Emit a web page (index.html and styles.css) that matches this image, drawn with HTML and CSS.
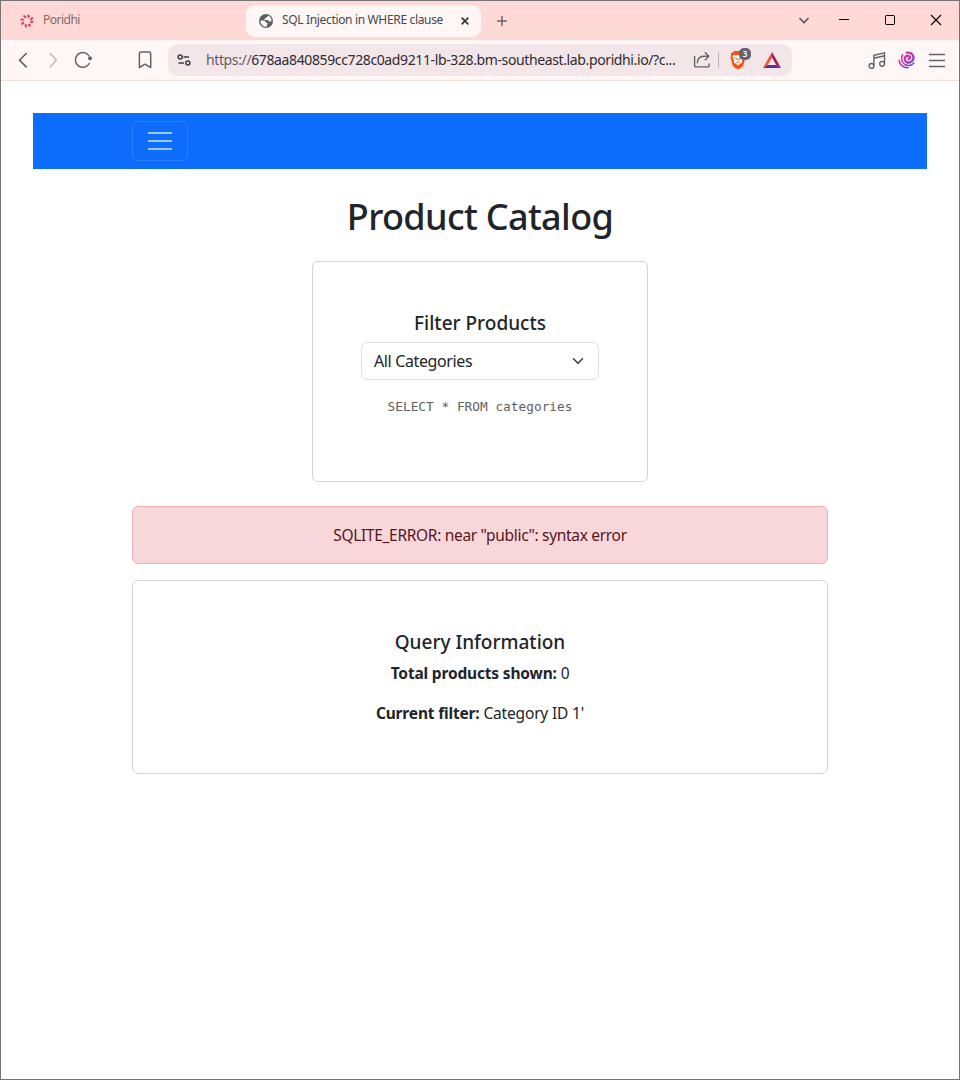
FILE: index.html
```html
<!DOCTYPE html>
<html lang="en">
<head>
<meta charset="utf-8">
<title>SQL Injection in WHERE clause</title>
<link rel="stylesheet" href="styles.css">
</head>
<body>
<div class="window">
  <header class="tabstrip">
    <div class="tab tab-idle">
      <svg class="poridhi-icon" width="14" height="14" viewBox="0 0 14 14" fill="none" stroke-width="2.2">
        <circle cx="7" cy="7" r="4.6" stroke="#e8395f" stroke-dasharray="2.2 1.41"/>
        <circle cx="7" cy="7" r="6" stroke="#b8327c" stroke-width="1.2" stroke-dasharray="1.6 3.11"/>
      </svg>
      <span class="tab-label idle-label">Poridhi</span>
    </div>
    <div class="tab tab-active">
      <svg class="globe" width="14" height="14" viewBox="0 0 14 14">
        <circle cx="7" cy="7" r="7" fill="#5b5e64"/>
        <path d="M8.800 1.500A5.800 5.800 0 0 1 12.700 6.300C12.100 7.100 11.700 7.700 10.900 7.700 9.600 7.700 9.500 6 8.200 6H5.400V4.800L6.800 4.500 7.200 3.200 8.800 2.800Z" fill="#fff7f5"/>
        <path d="M1.400 6.600H4.800C6.300 6.600 6.300 8.700 7.700 8.800 8.900 8.900 8.900 10.200 8 10.700L7.700 12.700A5.700 5.700 0 0 1 1.400 6.600Z" fill="#fff7f5"/>
      </svg>
      <span class="tab-label active-label">SQL Injection in WHERE clause</span>
      <svg class="tab-close" width="8" height="8" viewBox="0 0 8 8"><path d="M.7.7 7.3 7.3M7.3.7.7 7.3" stroke="#36373d" stroke-width="1.7"/></svg>
    </div>
    <svg class="tab-new" width="12" height="12" viewBox="0 0 12 12"><path d="M6 1v10M1 6h10" stroke="#62646b" stroke-width="1.5"/></svg>
    <div class="window-controls">
      <svg width="40" height="39" viewBox="0 0 40 39" fill="none"><path d="m15.500 17 4.500 4.700 4.500-4.700" stroke="#5f626a" stroke-width="1.700"/></svg>
      <svg width="40" height="39" viewBox="0 0 40 39"><path d="M15 18.500h10" stroke="#000"/></svg>
      <svg width="52" height="39" viewBox="0 0 52 39" fill="none"><rect x="21.500" y="14.500" width="9" height="9" rx=".8" stroke="#000"/></svg>
      <svg width="43" height="39" viewBox="0 0 43 39"><path d="m15 14 10 10m0-10L15 24" stroke="#000" stroke-width="1.100"/></svg>
    </div>
  </header>

  <div class="toolbar">
    <svg class="nav-buttons" width="100" height="39" viewBox="0 0 100 39" fill="none" stroke-linecap="round" stroke-linejoin="round">
      <path d="m25.200 12.500-6.700 6.700 6.700 6.700" stroke="#55585e" stroke-width="1.500"/>
      <path d="m49.200 12.500 6.200 6.700-6.200 6.700" stroke="#bdb8ba" stroke-width="1.500"/>
      <path d="M87.800 14.600A7.400 7.400 0 1 0 88.300 22.500" stroke="#62656d" stroke-width="1.500"/>
      <circle cx="89" cy="17.300" r="2" fill="#62656d"/>
    </svg>
    <svg class="bookmark" width="14" height="18" viewBox="0 0 14 18" fill="none" stroke="#62656d" stroke-width="1.500" stroke-linejoin="round"><path d="M3 1h8.200a1.500 1.500 0 0 1 1.500 1.500V16.500L7 13.200 1.400 16.500V2.500A1.500 1.500 0 0 1 3 1Z"/></svg>
    <div class="address">
      <svg class="site-settings" width="14" height="14" viewBox="0 0 14 14" fill="none" stroke="#403d43" stroke-width="1.500"><circle cx="3.200" cy="4" r="2"/><path d="M6.500 4H12M1.500 10H7"/><circle cx="10.800" cy="10" r="2"/></svg>
      <span class="url"><span class="scheme">https://</span>678aa840859cc728c0ad9211-lb-328.bm-southeast.lab.poridhi.io/?c...</span>
      <svg class="share" width="18" height="18" viewBox="0 0 18 18" fill="none" stroke="#65636a" stroke-width="1.400" stroke-linejoin="round"><path d="M1.600 5v9.400c0 .9.600 1.500 1.500 1.500h11.700c.7 0 1.300-.6 1.300-1.500V12.400"/><path d="M4.400 12.200c0-4.300 2.400-7 6.400-7h4.800M11.800 1.300l4 3.900-4 4"/></svg>
      <span class="divider"></span>
      <div class="shields">
        <svg width="18" height="20" viewBox="0 0 18 20">
          <path d="M5.300 1h7.400l1.800 1.400 1.800 1-.4 2 .6 1.800-2.200 8.300c-.4 1.300-3.700 3.100-5.300 3.800-1.600-.7-4.900-2.500-5.300-3.800L1.500 7.200l.6-1.800-.4-2 1.800-1Z" fill="#f9500c"/>
          <path d="m4.200 4.700 3 .5L9 4.700l1.800.5 3-.5.800 2.200-1.600 3.500.3 2-2.200 1.300L9 15.600l-2.100-1.900-2.200-1.300.3-2-1.600-3.500Z" fill="#fff"/>
          <path d="m4.900 7.700 2.800.7-.6 1.500M13.100 7.700l-2.800.7.600 1.500M9 8v3M7.200 12.700l1.800-.8 1.800.8" fill="none" stroke="#f9500c" stroke-width=".8"/>
        </svg>
        <span class="badge">3</span>
      </div>
      <svg class="rewards" width="18" height="16" viewBox="0 0 18 16"><path d="M9 0 0 16 4.700 13 9 5.400Z" fill="#ff4b2d"/><path d="M9 0v5.400L13.300 13 18 16Z" fill="#9e1f63"/><path d="M0 16h18l-4.700-3H4.700Z" fill="#662d91"/></svg>
    </div>
    <div class="extensions">
      <svg width="18" height="18" viewBox="0 0 18 18" fill="none" stroke="#5f626a" stroke-width="1.400"><circle cx="3.500" cy="14.900" r="2.400"/><circle cx="14.100" cy="12.800" r="2.400"/><path d="M5.900 14.900V4.200l10.600-2.400v11M5.900 7.200l10.600-2.400"/></svg>
      <svg width="18" height="18" viewBox="0 0 18 18" fill="none" stroke-linecap="round">
        <defs><linearGradient id="swirl" gradientUnits="userSpaceOnUse" x1="2" y1="3" x2="15" y2="15"><stop offset="0" stop-color="#ef3a94"/><stop offset=".5" stop-color="#bf35b5"/><stop offset="1" stop-color="#4b4ce0"/></linearGradient></defs>
        <path d="M10.600 8.200C12 7.900 12.600 6.200 11.200 5.200 9.400 4 6.700 5.300 6.700 7.900c0 2.700 2.600 4.200 5.100 3.500 3.100-.8 4.600-4.300 3-7.100C13.500 2 11.200 1.300 8.700 1.700" stroke="url(#swirl)" stroke-width="2.300"/>
        <path d="M4.700 3.600C2.400 7.200 3.700 12 7.500 13.700c2.900 1.300 6.200.6 8.400-1.700M1.100 9.300c.4 4 4.100 7.600 8.900 7.400" stroke="url(#swirl)" stroke-width="1.600"/>
      </svg>
      <svg width="18" height="18" viewBox="0 0 18 18"><path d="M1 3.500h16M1 9.500h16M1 15.500h16" stroke="#5f626a" stroke-width="1.400"/></svg>
    </div>
  </div>

  <main class="page">
    <nav class="navbar">
      <button class="navbar-toggler" aria-label="Toggle navigation">
        <svg width="30" height="30" viewBox="0 0 30 30"><path d="M3 7h24M3 15h24M3 23h24" stroke="#9ec5fe" stroke-width="2"/></svg>
      </button>
    </nav>
    <div class="container">
      <h1>Product Catalog</h1>
      <section class="card filter-card">
        <h5>Filter Products</h5>
        <div class="select">
          <span>All Categories</span>
          <svg width="16" height="12" viewBox="0 0 16 16" preserveAspectRatio="xMidYMid"><path d="m2 5 6 6 6-6" fill="none" stroke="#343a40" stroke-width="2" stroke-linecap="round" stroke-linejoin="round"/></svg>
        </div>
        <code>SELECT * FROM categories</code>
      </section>
      <div class="alert">SQLITE_ERROR: near "public": syntax error</div>
      <section class="card info-card">
        <h5>Query Information</h5>
        <p><strong>Total products shown:</strong> 0</p>
        <p><strong>Current filter:</strong> Category ID 1'</p>
      </section>
    </div>
  </main>
</div>
</body>
</html>
```
FILE: styles.css
```css
* { box-sizing: border-box; }
body { margin: 0; font-family: "Noto Sans", "Open Sans", sans-serif; color: #212529; background: #fff; }
svg { display: block; flex: none; }
.window { width: 960px; height: 1080px; border: 1px solid #757575; overflow: hidden; }

.tabstrip { display: flex; align-items: center; height: 39px; background: #ffd9d6; }
.tab { display: flex; align-items: center; height: 32px; font-size: 12px; white-space: nowrap; }
.tab-idle { width: 245px; padding-left: 19px; color: #7b6b6c; letter-spacing: -0.5px; }
.tab-active { width: 235px; padding-left: 13px; border-radius: 9px; background: #fff7f5; color: #4a464c; }
.idle-label { margin-left: 9px; }
.active-label { width: 179px; margin-left: 9px; letter-spacing: -0.34px; }
.tab-label { padding-bottom: 2px; }
.tab-new { margin-left: 15px; }
.window-controls { display: flex; margin-left: auto; }

.toolbar { display: flex; align-items: center; height: 41px; background: #fff7f5; border-bottom: 1px solid #f6dddb; }
.bookmark { margin-left: 37px; }
.address { display: flex; align-items: center; width: 624px; height: 32px; margin-left: 16px; padding-left: 9px; border-radius: 10px; background: #f2e6e8; }
.url { width: 487px; margin-left: 15px; padding-bottom: 1px; font-size: 14px; white-space: nowrap; letter-spacing: -0.38px; color: #302b30; }
.scheme { color: #625c62; }
.divider { width: 1px; height: 16px; margin: 0 10px 0 7px; background: #bbb2b6; }
.shields { position: relative; }
.badge { position: absolute; left: 10px; top: -2px; width: 12px; height: 12px; border-radius: 5px; background: #62656f; color: #fff; font-size: 8px; font-weight: 600; line-height: 12px; text-align: center; }
.rewards { margin-left: 16px; }
.extensions { display: flex; gap: 12px; margin-left: 76px; }

.page { padding: 32px; }
.navbar { display: flex; align-items: center; height: 56px; padding-left: 99px; background: #0d6efd; }
.navbar-toggler { display: flex; justify-content: center; align-items: center; width: 56px; height: 40px; padding: 0; border: 1px solid #2a7ffd; border-radius: 6px; background: none; }
.container { width: 696px; margin: 24px auto 0; text-align: center; }
h1 { margin: 0 0 20px; font-size: 36px; line-height: 48px; font-weight: 500; letter-spacing: -0.65px; }
h5 { margin: 0 0 7px; padding-top: 1px; font-size: 19px; line-height: 24px; font-weight: 500; white-space: nowrap; }
.card { padding: 48px; border: 1px solid #d3d3d4; border-radius: 6px; }
.filter-card { width: 336px; height: 221px; margin: 0 auto 24px; }
.select { display: flex; align-items: center; justify-content: space-between; height: 38px; margin-bottom: 16px; padding: 0 12px; border: 1px solid #dee2e6; border-radius: 6px; font-size: 16px; letter-spacing: -0.37px; }
code { display: block; font: 12.8px/21px "DejaVu Sans Mono", monospace; color: #5f6062; white-space: nowrap; }
.alert { height: 58px; margin-bottom: 16px; border: 1px solid #f1aeb5; border-radius: 6px; background: #f8d7da; color: #58151c; font-size: 15.5px; line-height: 57px; letter-spacing: -0.32px; }
.info-card { height: 194px; }
p { margin: 0 0 16px; font-size: 15.5px; line-height: 24px; letter-spacing: -0.17px; }
```
